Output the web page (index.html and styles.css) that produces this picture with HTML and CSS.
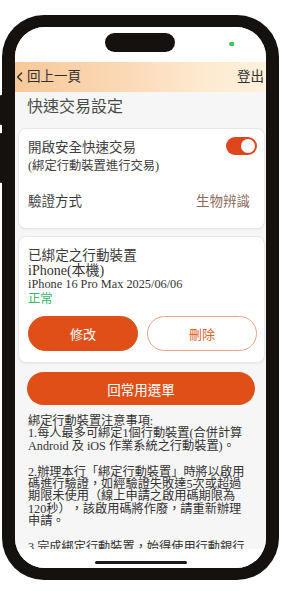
FILE: index.html
```html
<!DOCTYPE html>
<html lang="zh-Hant">
<head>
<meta charset="utf-8">
<title>快速交易設定</title>
<link rel="stylesheet" href="styles.css">
</head>
<body>
<div class="phone">
  <span class="side-btn side-btn-up"></span>
  <span class="side-btn side-btn-down"></span>
  <div class="screen">
    <div class="status">
      <span class="island"></span>
      <span class="battery"></span>
    </div>
    <header class="nav">
      <span class="back"><svg class="chev" width="7" height="10" viewBox="0 0 7 10"><polyline points="5.6,1 1.6,5 5.6,9" fill="none" stroke="#2e2e2e" stroke-width="1.4" stroke-linecap="round" stroke-linejoin="round"/></svg>回上一頁</span>
      <span class="logout">登出</span>
    </header>
    <main class="content">
      <h1 class="title">快速交易設定</h1>
      <section class="card card-setting">
        <div class="row-toggle">
          <div class="toggle-text">
            <div class="label">開啟安全快速交易</div>
            <div class="sub">(綁定行動裝置進行交易)</div>
          </div>
          <span class="toggle"><span class="knob"></span></span>
        </div>
        <div class="row-method">
          <span class="label">驗證方式</span>
          <span class="value">生物辨識</span>
        </div>
      </section>
      <section class="card card-device">
        <div class="dev-head">已綁定之行動裝置</div>
        <div class="dev-name">iPhone(本機)</div>
        <div class="dev-info">iPhone 16 Pro Max 2025/06/06</div>
        <div class="dev-status">正常</div>
        <div class="dev-actions">
          <button class="btn btn-fill">修改</button>
          <button class="btn btn-outline">刪除</button>
        </div>
      </section>
      <button class="btn-main">回常用選單</button>
      <div class="notes">
        <p>綁定行動裝置注意事項:<br>1.每人最多可綁定1個行動裝置(合併計算 Android 及 iOS 作業系統之行動裝置)。</p>
        <p>2.辦理本行「綁定行動裝置」時將以啟用碼進行驗證，如經驗證失敗達5次或超過期限未使用（線上申請之啟用碼期限為120秒），該啟用碼將作廢，請重新辦理申請。</p>
        <p>3.完成綁定行動裝置，始得使用行動銀行相關交易功能。</p>
      </div>
    </main>
    <div class="home"><span class="home-bar"></span></div>
  </div>
</div>
</body>
</html>
```
FILE: styles.css
```css
* { box-sizing: border-box; }
html, body {
  margin: 0;
  padding: 0;
  background: #ffffff;
}
body {
  width: 282px;
  height: 595px;
  overflow: hidden;
  font-family: "Liberation Serif", "Noto Sans CJK TC", serif;
  color: #333333;
}
.phone {
  position: relative;
  margin: 15px 3px 0 2px;
  width: 277px;
  height: 565px;
  padding: 12px 13px 12px 13px;
  background: #15110f;
  border-radius: 42px;
}
.side-btn {
  position: absolute;
  left: -2px;
  width: 3px;
  background: #15110f;
  border-radius: 1px 0 0 1px;
}
.side-btn-up { top: 80px; height: 30px; }
.side-btn-down { top: 118px; height: 50px; }
.screen {
  width: 251px;
  height: 541px;
  background: #ffffff;
  border-radius: 30px;
  overflow: hidden;
  display: flex;
  flex-direction: column;
}
.status {
  position: relative;
  height: 35px;
  flex: none;
  background: #ffffff;
}
.island {
  position: absolute;
  left: 90px;
  top: 6px;
  width: 70px;
  height: 19px;
  border-radius: 10px;
  background: #15110f;
}
.battery {
  position: absolute;
  left: 214px;
  top: 15px;
  width: 5px;
  height: 4px;
  border-radius: 2px 1px 1px 2px;
  background: #2fcf4f;
}
.nav {
  height: 30px;
  flex: none;
  display: flex;
  align-items: center;
  justify-content: space-between;
  padding: 0 2px 0 1px;
  background: linear-gradient(90deg, #f8c899 0%, #fbd9b7 45%, #fdeacf 75%, #fff1dd 100%);
  font-size: 13.5px;
  line-height: 18px;
  color: #2e2e2e;
}
.back {
  display: flex;
  align-items: center;
}
.chev {
  display: block;
  margin-right: 4px;
}
.content {
  flex: 1;
  min-height: 0;
  overflow: hidden;
  background: #f6f6f6;
}
.title {
  margin: 0 0 11px;
  padding: 5px 0 0 12px;
  font-size: 16px;
  line-height: 20px;
  font-weight: normal;
  color: #4a4a4a;
}
.card {
  margin: 0 1px 0 3px;
  background: #ffffff;
  border: 1px solid #e7e7e7;
  border-radius: 8px;
  box-shadow: 0 1px 2px rgba(0, 0, 0, 0.05);
}
.card-setting {
  padding: 10px 7px 17px 9px;
}
.row-toggle {
  display: flex;
  justify-content: space-between;
  align-items: flex-start;
}
.label {
  font-size: 13.5px;
  line-height: 18px;
  color: #3d3d3d;
}
.sub {
  font-size: 12.3px;
  line-height: 18px;
  color: #3d3d3d;
}
.toggle {
  margin-top: -2px;
  width: 31px;
  height: 18px;
  border-radius: 9px;
  background: #e0461d;
  display: flex;
  justify-content: flex-end;
  align-items: center;
  padding: 0 2px;
}
.knob {
  width: 14px;
  height: 14px;
  border-radius: 50%;
  background: #ffffff;
}
.row-method {
  margin-top: 18px;
  display: flex;
  justify-content: space-between;
  align-items: center;
  padding-right: 7px;
}
.value {
  font-size: 13.5px;
  line-height: 18px;
  color: #8b6a5c;
}
.card-device {
  margin-top: 7px;
  padding: 11px 7px 11px 9px;
  color: #333333;
}
.dev-head {
  font-size: 13.6px;
  line-height: 16px;
  color: #3a3a3a;
}
.dev-name {
  font-size: 14px;
  line-height: 14px;
}
.dev-info {
  font-size: 12.3px;
  line-height: 13.5px;
}
.dev-status {
  font-size: 12.3px;
  line-height: 14px;
  color: #35b866;
}
.dev-actions {
  margin-top: 10.5px;
  display: flex;
  gap: 9px;
}
.btn {
  flex: 1;
  height: 35px;
  border-radius: 18px;
  font-family: "Liberation Serif", "Noto Sans CJK TC", serif;
  font-size: 13px;
  padding: 0;
  margin: 0;
}
.btn-fill {
  background: #e04f17;
  border: 1px solid #e04f17;
  color: #ffffff;
}
.btn-outline {
  background: #ffffff;
  border: 1px solid #eaa485;
  color: #e0622b;
}
.btn-main {
  display: block;
  margin: 9px 0 0 12px;
  width: 228px;
  height: 33px;
  border: 0;
  border-radius: 17px;
  background: #e14f18;
  color: #ffffff;
  font-family: "Liberation Serif", "Noto Sans CJK TC", serif;
  font-size: 13.5px;
  padding: 0;
}
.notes {
  margin-top: 10px;
  padding-left: 13px;
  width: 234px;
  font-size: 12.2px;
  line-height: 12.3px;
  color: #333333;
  text-spacing-trim: space-all;
}
.notes p {
  margin: 0 0 14px;
}
.home {
  height: 19px;
  flex: none;
  background: #ffffff;
  display: flex;
  justify-content: center;
  padding-top: 12px;
}
.home-bar {
  display: block;
  width: 92px;
  height: 3px;
  border-radius: 2px;
  background: #1a1a1a;
}
```
